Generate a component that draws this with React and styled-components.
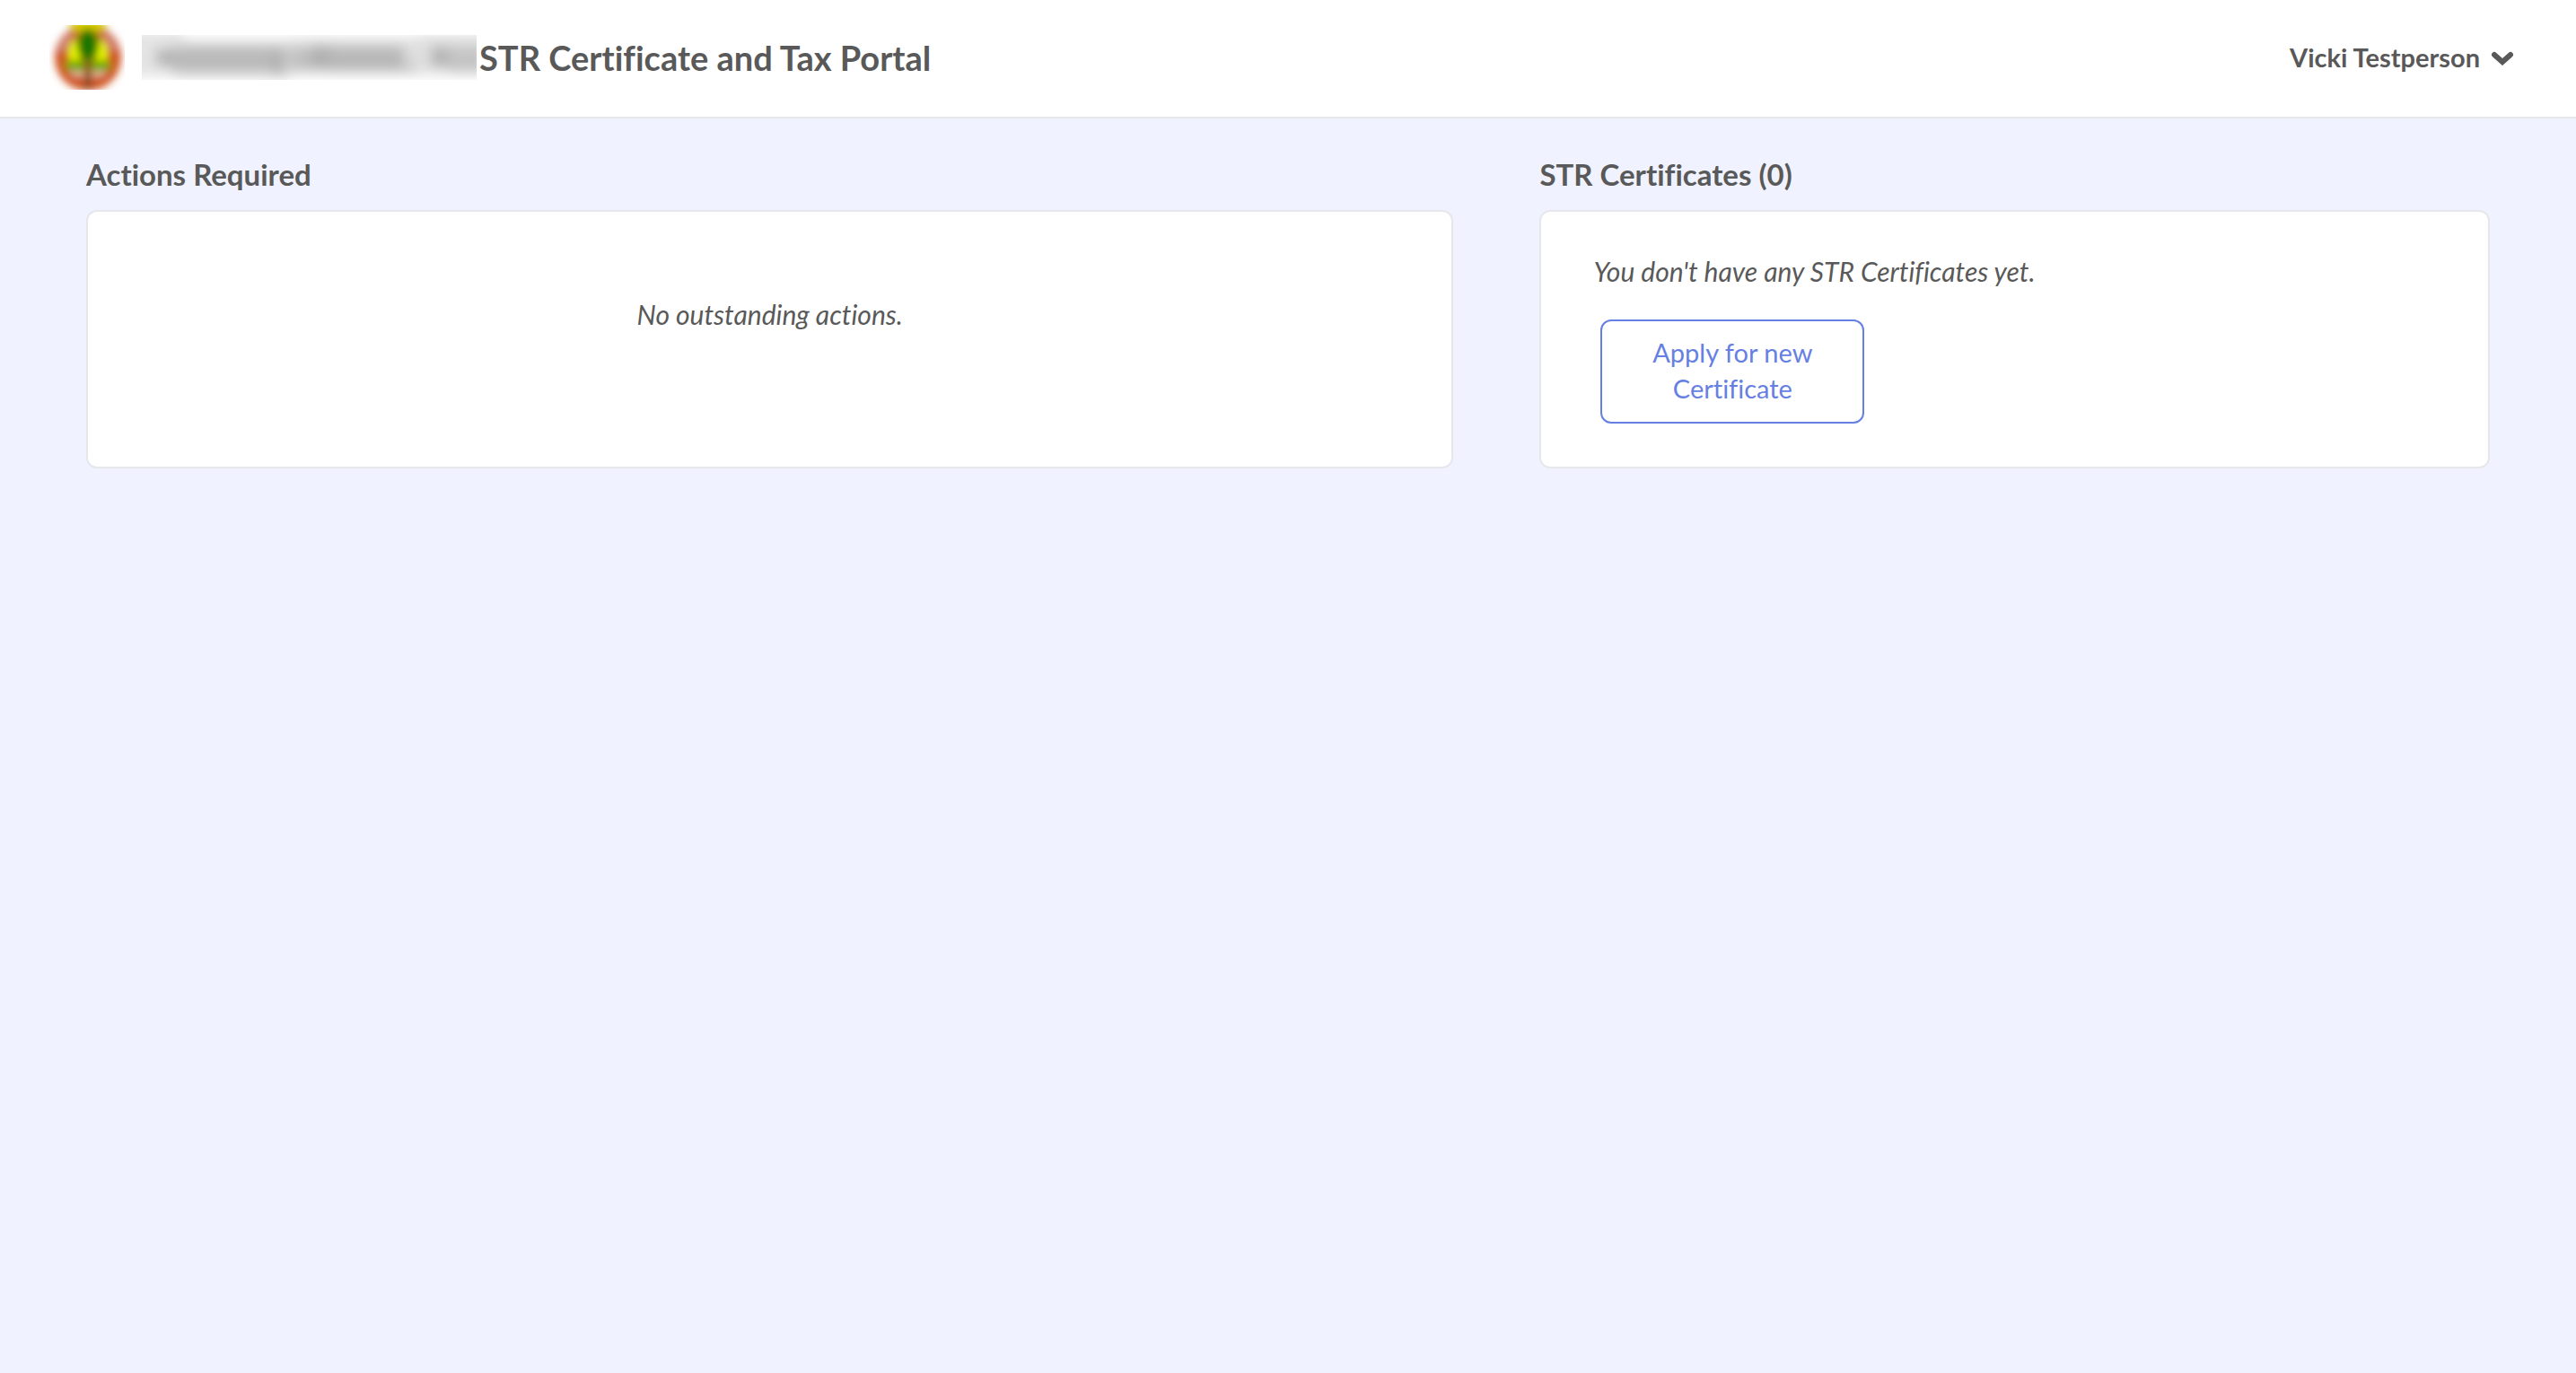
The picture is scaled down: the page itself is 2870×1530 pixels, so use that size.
import React from "react";
import styled, { createGlobalStyle } from "styled-components";

const GlobalStyle = createGlobalStyle`
  * {
    box-sizing: border-box;
  }

  body {
    margin: 0;
    min-height: 100vh;
    background-color: #f0f3ff;
    color: #595959;
    font-family: Lato, "Open Sans", sans-serif;
    font-size: 29px;
    font-variant-ligatures: none;
    line-height: 40px;
  }
`;

const Header = styled.header`
  display: flex;
  justify-content: space-between;
  align-items: center;
  height: 132px;
  padding: 0 69px 2px 55px;
  background-color: #fff;
  border-bottom: 2px solid #e5e7eb;
`;

const Brand = styled.div`
  display: flex;
  align-items: center;
`;

const Seal = styled.svg`
  width: 84px;
  height: 72px;
  margin-right: 19px;
`;

const Redacted = styled.svg`
  width: 373px;
  height: 50px;
  margin-right: 3px;
`;

const Title = styled.h1`
  margin: 0;
  font-size: 38px;
  font-weight: 700;
  line-height: 48px;
`;

const UserButton = styled.button`
  display: flex;
  align-items: center;
  gap: 12px;
  padding: 0;
  border: none;
  background: none;
  color: inherit;
  font: inherit;
  font-weight: 700;
  cursor: pointer;

  svg {
    width: 26px;
    height: 18px;
  }
`;

const Main = styled.main`
  display: grid;
  grid-template-columns: 59fr 41fr;
  gap: 96px;
  padding: 38px 96px;
`;

const Section = styled.section`
  display: flex;
  flex-direction: column;
`;

const SectionTitle = styled.h2`
  margin: 0 0 16px;
  font-size: 33px;
  font-weight: 700;
  line-height: 48px;
`;

const Card = styled.div`
  flex: 1;
  display: flex;
  flex-direction: column;
  align-items: ${(props) => (props.$centered ? "center" : "flex-start")};
  gap: 34px;
  padding: ${(props) => (props.$centered ? "94px 60px 150px" : "46px 58px 48px")};
  background-color: #fff;
  border: 2px solid #e5e7eb;
  border-radius: 12px;
`;

const Note = styled.p`
  margin: 0;
  font-size: 30px;
  font-style: italic;
`;

const ApplyButton = styled.button`
  width: 294px;
  margin-left: 8px;
  padding: 15px 32px 17px;
  border: 2px solid #667fe3;
  border-radius: 12px;
  background-color: #fff;
  color: #667fe3;
  font: inherit;
  cursor: pointer;
`;

const CountySeal = () => (
  <Seal viewBox="0 0 84 72" aria-hidden="true">
    <defs>
      <filter id="sealBlur" x="-20%" y="-20%" width="140%" height="140%">
        <feGaussianBlur stdDeviation="4" />
      </filter>
    </defs>
    <g filter="url(#sealBlur)">
      <circle cx="43" cy="36" r="37" fill="#cf5524" />
      <path d="M8 28 Q12 10 26 4 L24 30 Z M76 28 Q72 10 60 4 L62 30 Z" fill="#d08070" />
      <ellipse cx="43" cy="0" rx="21" ry="9" fill="#d8cc00" />
      <circle cx="43" cy="31" r="23" fill="#c89a00" />
      <ellipse cx="28" cy="31" rx="6" ry="13" fill="#e8f800" />
      <ellipse cx="58" cy="31" rx="6" ry="13" fill="#e8f800" />
      <ellipse cx="29" cy="45" rx="12" ry="6" fill="#70ac00" />
      <ellipse cx="57" cy="45" rx="12" ry="6" fill="#70ac00" />
      <ellipse cx="43" cy="22" rx="12" ry="18" fill="#1c7600" />
      <path d="M24 53 Q43 58 62 53" stroke="#f0e4cc" strokeWidth="3" fill="none" />
      <rect x="39" y="40" width="8" height="32" fill="#8a4a24" />
    </g>
  </Seal>
);

// The county name is hidden behind a blurred strip.
const RedactedName = () => (
  <Redacted viewBox="0 0 373 50" aria-hidden="true">
    <defs>
      <filter id="nameBlur" x="-10%" y="-60%" width="120%" height="220%">
        <feGaussianBlur stdDeviation="7" />
      </filter>
    </defs>
    <g filter="url(#nameBlur)">
      <rect x="-14" y="-4" width="60" height="50" fill="#e4e4e4" />
      <rect x="40" y="6" width="125" height="42" fill="#dedede" />
      <rect x="162" y="4" width="150" height="40" fill="#dedede" />
      <rect x="306" y="0" width="90" height="44" fill="#e0e0e0" />
      <rect x="16" y="16" width="18" height="18" fill="#b0b0b0" />
      <rect x="32" y="13" width="128" height="28" fill="#bababa" />
      <rect x="146" y="16" width="13" height="28" fill="#b0b0b0" />
      <rect x="164" y="14" width="24" height="25" fill="#c0c0c0" />
      <rect x="188" y="12" width="22" height="26" fill="#b0b0b0" />
      <rect x="210" y="13" width="82" height="27" fill="#b8b8b8" />
      <rect x="292" y="28" width="14" height="16" fill="#d0d0d0" />
      <rect x="322" y="13" width="22" height="22" fill="#b4b4b4" />
      <rect x="342" y="13" width="40" height="28" fill="#c4c4c4" />
    </g>
  </Redacted>
);

const App = () => {
  return (
    <>
      <GlobalStyle />
      <Header>
        <Brand>
          <CountySeal />
          <RedactedName />
          <Title>STR Certificate and Tax Portal</Title>
        </Brand>
        <UserButton type="button">
          Vicki Testperson
          <svg viewBox="0 0 26 18" aria-hidden="true">
            <path d="M4 6 L13 14 L22 6" fill="none" stroke="currentColor" strokeWidth="6" strokeLinecap="round" />
          </svg>
        </UserButton>
      </Header>
      <Main>
        <Section>
          <SectionTitle>Actions Required</SectionTitle>
          <Card $centered>
            <Note>No outstanding actions.</Note>
          </Card>
        </Section>
        <Section>
          <SectionTitle>STR Certificates (0)</SectionTitle>
          <Card>
            <Note>You don't have any STR Certificates yet.</Note>
            <ApplyButton type="button">Apply for new Certificate</ApplyButton>
          </Card>
        </Section>
      </Main>
    </>
  );
};

export default App;
